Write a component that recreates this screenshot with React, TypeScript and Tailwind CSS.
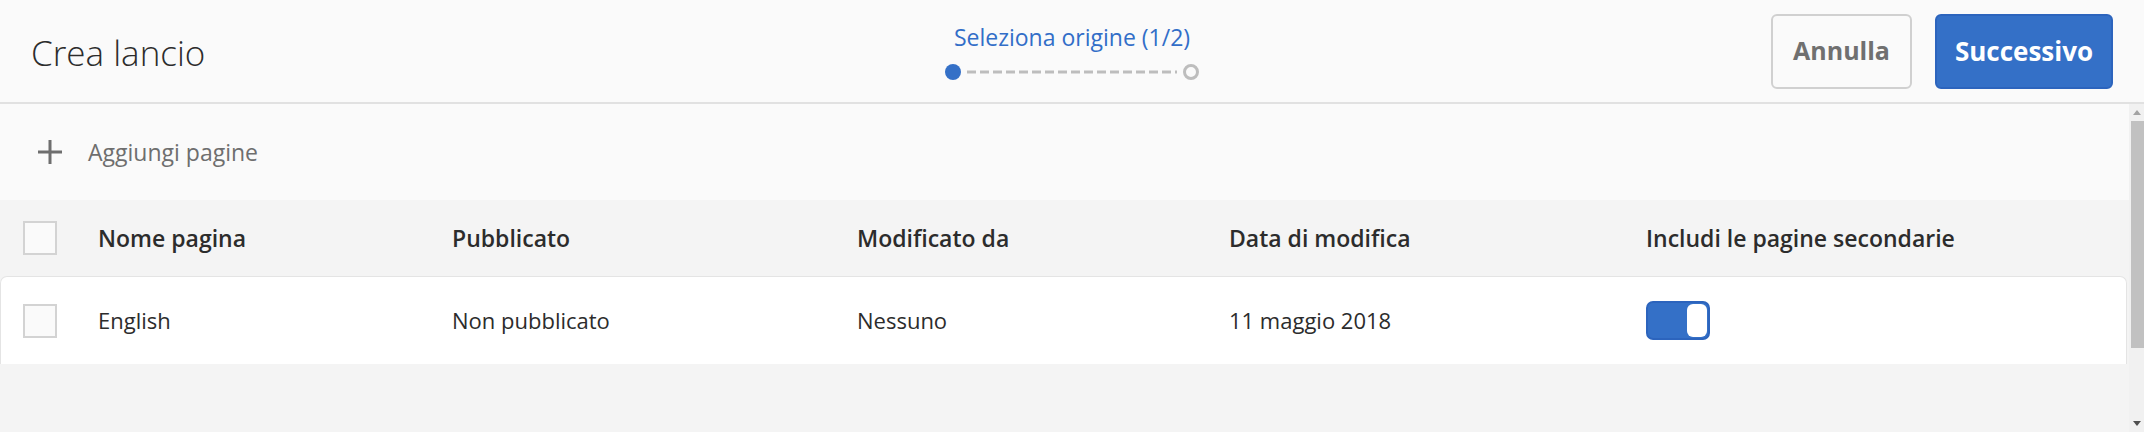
import { FC } from "react";

const font = { fontFamily: '"Open Sans", "Noto Sans", sans-serif' };

const columns = [
  { key: "name", label: "Nome pagina", width: "w-[354px]" },
  { key: "published", label: "Pubblicato", width: "w-[405px]" },
  { key: "modifiedBy", label: "Modificato da", width: "w-[372px]" },
  { key: "modifiedAt", label: "Data di modifica", width: "w-[417px]" },
];

const rows = [
  {
    id: "en",
    name: "English",
    published: "Non pubblicato",
    modifiedBy: "Nessuno",
    modifiedAt: "11 maggio 2018",
    children: true,
  },
];

const Checkbox: FC = () => (
  <span className="block h-[34px] w-[34px] border-2 border-[#d3d3d3] bg-[#fafafa]" />
);

const Toggle: FC<{ on: boolean }> = ({ on }) => (
  <span
    className={
      on
        ? "flex h-[39px] w-[64px] items-stretch justify-end rounded-[7px] border-2 border-[#2c64bd] bg-[#3470c7] p-[1px]"
        : "flex h-[39px] w-[64px] items-stretch justify-start rounded-[7px] border-2 border-[#b3b3b3] bg-[#e1e1e1] p-[1px]"
    }
  >
    <span className="w-[20px] rounded-[6px] bg-white" />
  </span>
);

const Stepper: FC = () => (
  <div className="flex flex-col items-center">
    <span className="text-[23px] leading-[30px] text-[#326ec8]">
      Seleziona origine (1/2)
    </span>
    <div className="mt-[12px] flex items-center gap-[6px]">
      <span className="h-[16px] w-[16px] rounded-full bg-[#3470c7]" />
      <svg width="210" height="4" viewBox="0 0 210 4">
        <line
          x1="0"
          y1="2"
          x2="210"
          y2="2"
          stroke="#bdbdbd"
          strokeWidth="3"
          strokeDasharray="9 4"
        />
      </svg>
      <span className="h-[16px] w-[16px] rounded-full border-[3px] border-[#bdbdbd] bg-[#fafafa]" />
    </div>
  </div>
);

const Scrollbar: FC = () => (
  <div className="flex w-[15px] flex-col items-center bg-[#f1f1f1]">
    <div className="flex h-[17px] items-center justify-center">
      <svg width="8" height="5" viewBox="0 0 8 5">
        <path d="M0 5 L4 0 L8 5 Z" fill="#a3a3a3" />
      </svg>
    </div>
    <div className="h-[227px] w-[13px] self-end bg-[#c1c1c1]" />
    <div className="flex-1" />
    <div className="flex h-[17px] items-center justify-center">
      <svg width="8" height="5" viewBox="0 0 8 5">
        <path d="M0 0 L8 0 L4 5 Z" fill="#505050" />
      </svg>
    </div>
  </div>
);

export default function App() {
  return (
    <div
      className="flex h-[432px] w-full flex-col overflow-hidden bg-[#f4f4f4] text-[#2c2c2c]"
      style={font}
    >
      <header className="grid h-[104px] shrink-0 grid-cols-[1fr_auto_1fr] items-center border-b-2 border-[#e1e1e1] bg-[#fafafa] px-[31px]">
        <h1 className="pt-[2px] text-[35px] font-light leading-none text-[#2c2c2c]">
          Crea lancio
        </h1>
        <Stepper />
        <div className="flex items-center justify-end gap-[23px]">
          <button className="h-[75px] w-[141px] rounded-[6px] border-2 border-[#d0d0d0] bg-[#fafafa] text-[25px] font-bold text-[#707070]">
            Annulla
          </button>
          <button className="h-[75px] w-[178px] rounded-[6px] border-2 border-[#2c64bd] bg-[#3470c7] text-[26px] font-bold text-white">
            Successivo
          </button>
        </div>
      </header>

      <div className="flex min-h-0 flex-1">
        <main className="flex flex-1 flex-col">
          <div className="flex h-[96px] shrink-0 items-center gap-[26px] bg-[#fafafa] pl-[38px]">
            <svg width="24" height="24" viewBox="0 0 24 24">
              <path d="M12 0 V24 M0 12 H24" stroke="#6e6e6e" strokeWidth="3" />
            </svg>
            <span className="text-[23px] text-[#6e6e6e]">Aggiungi pagine</span>
          </div>

          <div className="flex h-[76px] shrink-0 items-center bg-[#f4f4f4] text-[23px] font-semibold">
            <div className="w-[98px] pl-[23px]">
              <Checkbox />
            </div>
            {columns.map((c) => (
              <div key={c.key} className={c.width}>
                {c.label}
              </div>
            ))}
            <div className="flex-1">Includi le pagine secondarie</div>
          </div>

          {rows.map((r) => (
            <div
              key={r.id}
              className="mr-[2px] flex h-[88px] shrink-0 items-center rounded-t-[7px] border border-b-0 border-[#e4e4e4] bg-white text-[22px]"
            >
              <div className="w-[97px] pl-[22px]">
                <Checkbox />
              </div>
              <div className="w-[354px]">{r.name}</div>
              <div className="w-[405px]">{r.published}</div>
              <div className="w-[372px]">{r.modifiedBy}</div>
              <div className="w-[417px]">{r.modifiedAt}</div>
              <div className="flex-1">
                <Toggle on={r.children} />
              </div>
            </div>
          ))}
        </main>
        <Scrollbar />
      </div>
    </div>
  );
}
